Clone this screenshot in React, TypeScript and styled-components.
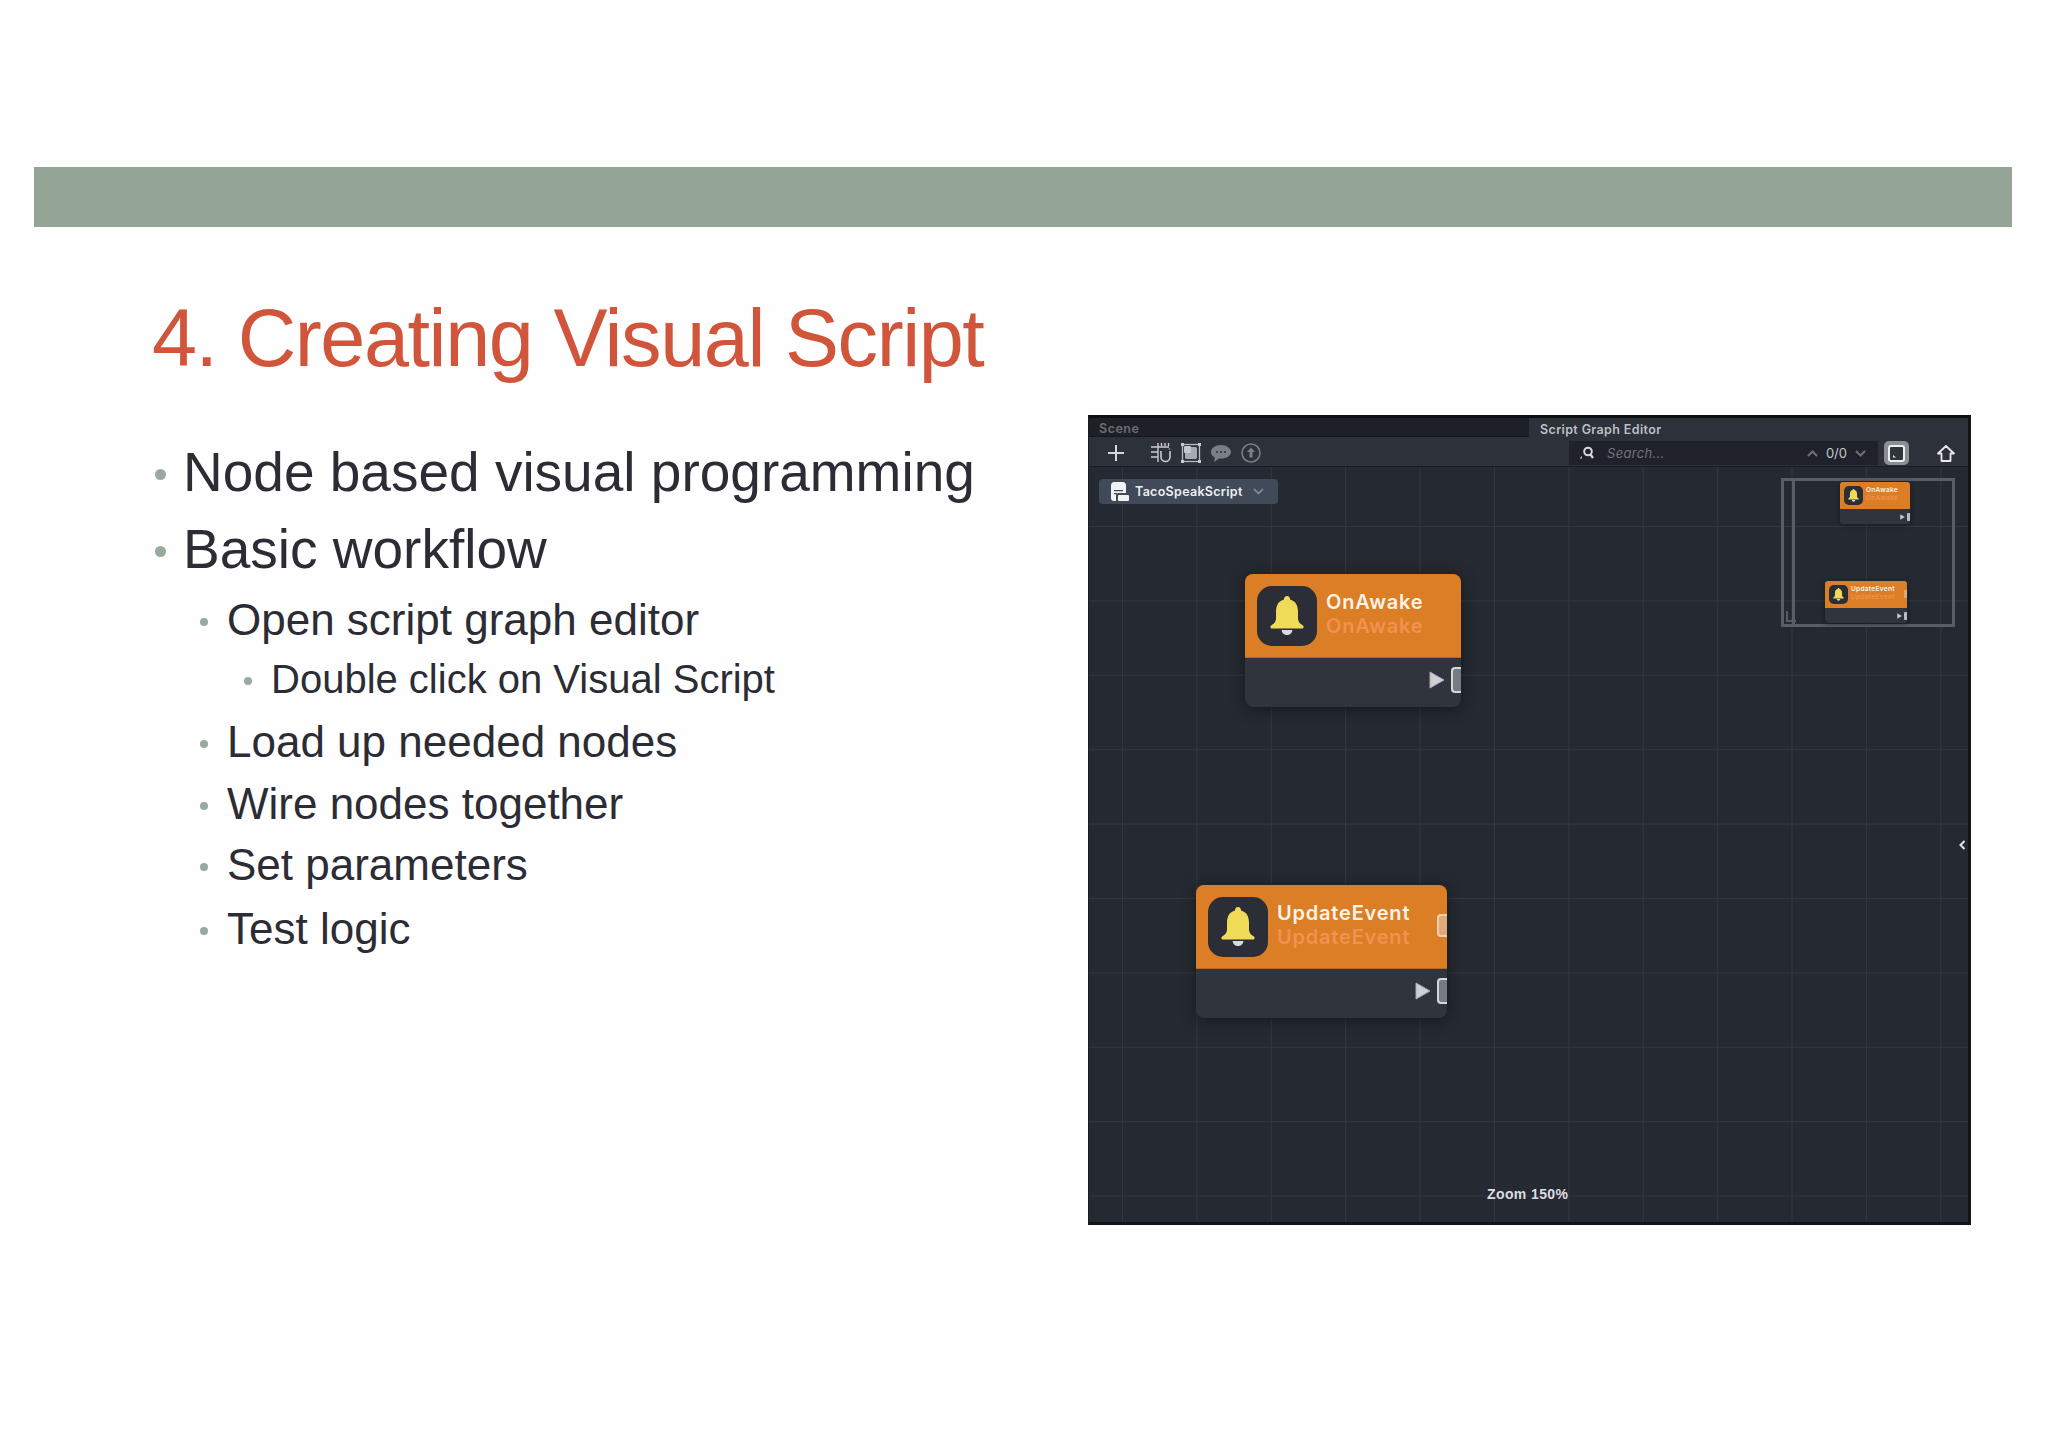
import React from "react";
import styled, { createGlobalStyle } from "styled-components";

const GlobalStyle = createGlobalStyle`
  html, body {
    margin: 0;
    padding: 0;
    background: #ffffff;
  }
`;

const Page = styled.div`
  width: 2048px;
  height: 1448px;
  overflow: hidden;
  font-family: "Liberation Sans", Arial, sans-serif;
  background: #fefefe;
`;

const Band = styled.div`
  width: 1978px;
  height: 60px;
  margin: 167px 0 0 34px;
  background: #94a598;
`;

const Title = styled.h1`
  margin: 63px 0 0 152px;
  font-size: 81px;
  line-height: 96px;
  font-weight: 400;
  letter-spacing: -1.44px;
  color: #d0553a;
  white-space: nowrap;
`;

const Content = styled.div`
  display: flex;
  align-items: flex-start;
`;

const BulletList = styled.ul`
  list-style: none;
  width: 1088px;
  margin: 0;
  padding: 54px 0 0 0;
  flex: none;
`;

const levels = {
  1: { size: 55, line: 64, indent: 155, dot: 11, gap: 17 },
  2: { size: 44, line: 52, indent: 200, dot: 8, gap: 19 },
  3: { size: 40, line: 46, indent: 244, dot: 8, gap: 19 },
};

const Item = styled.li<{ $level: 1 | 2 | 3; $top: number }>`
  display: flex;
  align-items: center;
  margin-top: ${(p) => p.$top}px;
  padding-left: ${(p) => levels[p.$level].indent}px;
  height: ${(p) => levels[p.$level].line}px;
  font-size: ${(p) => levels[p.$level].size}px;
  color: #2c2c35;
  white-space: nowrap;

  &::before {
    content: "";
    flex: none;
    width: ${(p) => levels[p.$level].dot}px;
    height: ${(p) => levels[p.$level].dot}px;
    margin-right: ${(p) => levels[p.$level].gap}px;
    margin-top: 4px;
    border-radius: 50%;
    background: #9aa89e;
  }
`;

const Editor = styled.div`
  width: 883px;
  height: 810px;
  margin-top: 29px;
  flex: none;
  box-sizing: border-box;
  display: flex;
  flex-direction: column;
  background: #252931;
  border-top: 3px solid #0e0f12;
  border-right: 3px solid #131418;
  border-bottom: 3px solid #131418;
  border-left: 1px solid #1a1c21;
  font-family: Inter, "Liberation Sans", sans-serif;
`;

const TabRow = styled.div`
  display: flex;
  height: 19px;
  background: #2d3139;
`;

const Tab = styled.div<{ $active?: boolean }>`
  display: flex;
  align-items: center;
  box-sizing: border-box;
  width: ${(p) => (p.$active ? "auto" : "440px")};
  flex: ${(p) => (p.$active ? 1 : "none")};
  padding: 3px 0 0 ${(p) => (p.$active ? "9px" : "10px")};
  font-size: 12.5px;
  font-weight: 600;
  letter-spacing: ${(p) => (p.$active ? "0.36px" : "0.5px")};
  color: ${(p) => (p.$active ? "#bcbfc4" : "#6b6f76")};
  background: ${(p) => (p.$active ? "#2d3139" : "#1d2027")};
  border-bottom: ${(p) => (p.$active ? "none" : "1px solid #15171b")};
  margin-right: ${(p) => (p.$active ? "0" : "2px")};
`;

const Toolbar = styled.div`
  display: flex;
  align-items: center;
  height: 30px;
  box-sizing: border-box;
  padding: 3px 0 0 19px;
  background: #2d3139;
  border-bottom: 1px solid #1a1c21;
`;

const ToolGroup = styled.div`
  display: flex;
  align-items: center;
  gap: 10px;
  margin-left: 27px;
`;

const SearchBox = styled.div`
  display: flex;
  align-items: center;
  width: 309px;
  height: 24px;
  margin-left: auto;
  box-sizing: border-box;
  padding: 0 12px 0 11px;
  background: #1f222a;
`;

const SearchHint = styled.span`
  margin-left: 13px;
  font-size: 13px;
  font-style: italic;
  letter-spacing: 0.3px;
  color: #6f7379;
`;

const Counter = styled.span`
  margin: 0 8px;
  font-size: 13px;
  color: #c4c6ca;
`;

const SearchEnd = styled.div`
  display: flex;
  align-items: center;
  margin-left: auto;
`;

const ToggleButton = styled.div`
  display: flex;
  align-items: center;
  justify-content: center;
  width: 25px;
  height: 24px;
  margin-left: 6px;
  border-radius: 5px;
  background: #8b8e94;
`;

const HomeButton = styled.div`
  display: flex;
  align-items: center;
  justify-content: center;
  width: 24px;
  margin: 0 10px 0 25px;
`;

const Canvas = styled.div`
  position: relative;
  flex: 1;
  background-color: #252931;
  background-image: linear-gradient(to right, #33373f 1px, transparent 1px),
    linear-gradient(to bottom, #33373f 1px, transparent 1px);
  background-size: 74.4px 74.4px;
  background-position: 33px 59px;
`;

const ScriptChip = styled.div`
  position: absolute;
  left: 10px;
  top: 12px;
  display: flex;
  align-items: center;
  width: 179px;
  height: 25px;
  box-sizing: border-box;
  padding-left: 12px;
  border-radius: 4px;
  background: #414a58;
  font-size: 12.5px;
  font-weight: 600;
  letter-spacing: 0.3px;
  color: #eceef0;
`;

const ChipLabel = styled.span`
  margin: 0 10px 0 6px;
`;

const Node = styled.div<{ $x: number; $y: number; $w: number }>`
  position: absolute;
  left: ${(p) => p.$x}px;
  top: ${(p) => p.$y}px;
  width: ${(p) => p.$w}px;
  border-radius: 8px;
  overflow: hidden;
  background: #30343c;
  box-shadow: 0 2px 14px rgba(10, 11, 14, 0.55);
`;

const NodeHead = styled.div`
  position: relative;
  display: flex;
  align-items: center;
  height: 84px;
  box-sizing: border-box;
  padding-left: 12px;
  background: #dc7e26;
  border-bottom: 1px solid #b9691f;
`;

const NodeIcon = styled.div`
  display: flex;
  align-items: center;
  justify-content: center;
  flex: none;
  width: 60px;
  height: 60px;
  border-radius: 15px;
  background: #2b2e36;
`;

const NodeText = styled.div`
  margin: 0 0 3px 9px;
  font-size: 20px;
  line-height: 24px;
  font-weight: 600;
  letter-spacing: 0.8px;
  color: #fbf3e6;
  white-space: nowrap;
`;

const NodeSub = styled.div`
  color: #f09250;
`;

const NodeBody = styled.div`
  display: flex;
  align-items: center;
  justify-content: flex-end;
  height: 49px;
  gap: 6px;
  padding-bottom: 5px;
  box-sizing: border-box;
`;

const Port = styled.div`
  width: 10px;
  height: 26px;
  box-sizing: border-box;
  border: 2px solid #d5d6d8;
  border-right: none;
  border-radius: 4px 0 0 4px;
  background: #767a81;
`;

const HeadPort = styled.div`
  position: absolute;
  right: 0;
  top: 29px;
  width: 10px;
  height: 23px;
  box-sizing: border-box;
  border: 2px solid #eccfae;
  border-right: none;
  border-radius: 4px 0 0 4px;
  background: #deaa78;
`;

const Minimap = styled.div`
  position: absolute;
  left: 692px;
  top: 11px;
  width: 174px;
  height: 149px;
  box-sizing: border-box;
  border: 3px solid #595d64;
`;

const MiniRail = styled.div`
  position: absolute;
  left: 8px;
  top: 0;
  bottom: 0;
  width: 3px;
  background: #595d64;
`;

const MiniCorner = styled.div`
  position: absolute;
  left: 2px;
  bottom: 2px;
  width: 8px;
  height: 9px;
  border-left: 2px solid #595d64;
  border-bottom: 2px solid #595d64;
`;

const MiniNode = styled.div<{ $x: number; $y: number; $w: number }>`
  position: absolute;
  left: ${(p) => p.$x}px;
  top: ${(p) => p.$y}px;
  width: ${(p) => p.$w}px;
  height: 42px;
  border-radius: 3px;
  overflow: hidden;
  background: #30343c;
  box-shadow: 0 1px 5px rgba(10, 11, 14, 0.5);
`;

const MiniHead = styled.div`
  position: relative;
  display: flex;
  align-items: flex-start;
  height: 27px;
  box-sizing: border-box;
  padding: 4px 0 0 4px;
  background: #dc7e26;
`;

const MiniIcon = styled.div`
  display: flex;
  align-items: center;
  justify-content: center;
  flex: none;
  width: 19px;
  height: 19px;
  border-radius: 5px;
  background: #2b2e36;
`;

const MiniText = styled.div`
  margin-left: 3px;
  font-size: 6.5px;
  line-height: 8px;
  font-weight: 600;
  letter-spacing: 0.3px;
  color: #fbf3e6;
  white-space: nowrap;
`;

const MiniBody = styled.div`
  display: flex;
  align-items: center;
  justify-content: flex-end;
  height: 15px;
  gap: 2px;
`;

const MiniPort = styled.div`
  width: 3px;
  height: 8px;
  border-radius: 1px 0 0 1px;
  background: #b9bbbf;
`;

const MiniHeadPort = styled(MiniPort)`
  position: absolute;
  right: 0;
  top: 9px;
  background: #deaa78;
`;

const ZoomLabel = styled.div`
  position: absolute;
  left: 398px;
  bottom: 20px;
  font-family: "Liberation Sans", Arial, sans-serif;
  font-size: 14px;
  font-weight: 700;
  letter-spacing: 0.4px;
  color: #dcdde0;
`;

const CollapseHandle = styled.div`
  position: absolute;
  right: 2px;
  top: 373px;
  display: flex;
`;

const Bell = ({ size }: { size: number }) => (
  <svg width={size} height={size * 1.15} viewBox="0 0 34 39">
    <path
      d="M17 0c-2 0-3 1.4-3 3.4C8.500 4.800 6 9.500 6 15.500v7c0 3-1.800 5.200-4.600 6.800C-.2 30.200.2 32.500 1.800 32.500h30.400c1.600 0 2-2.300.4-3.200-2.800-1.600-4.600-3.800-4.600-6.800v-7c0-6-2.500-10.700-8-12.100C20 1.400 19 0 17 0z"
      fill="#efdb57"
    />
    <path d="M11.500 34h11c-.5 3-2.500 5-5.500 5s-5-2-5.500-5z" fill="#d9dae2" />
  </svg>
);

const PlayMark = ({ w, h }: { w: number; h: number }) => (
  <svg width={w} height={h} viewBox="0 0 16 18">
    <path d="M1 1l14 8-14 8z" fill="#cfd0d4" stroke="#a9abb0" strokeLinejoin="round" />
  </svg>
);

const Chevron = ({ up }: { up?: boolean }) => (
  <svg width="11" height="7" viewBox="0 0 11 7">
    <path d={up ? "M1 6l4.500-4.500L10 6" : "M1 1l4.500 4.500L10 1"} fill="none" stroke="#6d7177" strokeWidth="2" />
  </svg>
);

const PlusIcon = () => (
  <svg width="16" height="16" viewBox="0 0 16 16">
    <path d="M8 0v16M0 8h16" stroke="#d6d7da" strokeWidth="2" />
  </svg>
);

const DebugIcon = () => (
  <svg width="20" height="20" viewBox="0 0 20 20" fill="none" stroke="#c9cbce" strokeWidth="1.400">
    <path d="M7 4v15M7 4V0M10.500 0v3M14 0v3M17.500 0v3M7 4h11M0 4h7M0 9h7M0 14h7" />
    <path d="M10 8v6a4.500 4.500 0 0 0 9 0V8" strokeWidth="1.600" />
    <path d="M18.500 5.500v1" />
  </svg>
);

const FrameIcon = () => (
  <svg width="20" height="20" viewBox="0 0 20 20">
    <rect x="1.500" y="1.500" width="17" height="17" fill="none" stroke="#b9bcc1" strokeWidth="1.300" />
    <rect x="4" y="4" width="12" height="12" rx="1.500" fill="#a5a9b0" />
    <rect x="3" y="3" width="7" height="7" rx="1" fill="#c4c8ce" />
    <path d="M0 0h3v3H0zM17 0h3v3h-3zM0 17h3v3H0zM17 17h3v3h-3z" fill="#c9cbce" />
  </svg>
);

const CommentIcon = () => (
  <svg width="20" height="20" viewBox="0 0 20 20">
    <path d="M10 2C4.500 2 0 5 0 9c0 2.300 1.500 4.300 3.800 5.500L3 19l5-3.500c.7.100 1.300.1 2 .1 5.500 0 10-3 10-6.600S15.500 2 10 2z" fill="#7a7e85" />
    <circle cx="6" cy="9" r="1" fill="#2d3139" />
    <circle cx="10" cy="9" r="1" fill="#2d3139" />
    <circle cx="14" cy="9" r="1" fill="#2d3139" />
  </svg>
);

const UploadIcon = () => (
  <svg width="20" height="20" viewBox="0 0 20 20">
    <circle cx="10" cy="10" r="9" fill="none" stroke="#7a7e85" strokeWidth="1.600" />
    <path d="M10 4.500l4 4.500h-2.500v5.500h-3V9H6z" fill="#7a7e85" />
  </svg>
);

const SearchIcon = () => (
  <svg width="14" height="14" viewBox="0 0 14 14" fill="none">
    <circle cx="8" cy="5.500" r="3.800" stroke="#d5d7da" strokeWidth="2" />
    <path d="M10.500 8.500L13 12" stroke="#d5d7da" strokeWidth="2.200" />
    <path d="M1 13v-2h1" stroke="#d5d7da" strokeWidth="1" />
  </svg>
);

const ScriptIcon = () => (
  <svg width="18" height="19" viewBox="0 0 18 19">
    <path d="M3 0h9c1.500 0 3 1.500 3 3v8H7.500C5.500 11 5 12 5 13.500V19H3c-1.500 0-3-1-3-2.500V3C0 1.500 1.500 0 3 0z" fill="#f2f3f4" />
    <path d="M3 8h9v1.300H3zM3 11h3v1.300H3z" fill="#414a58" />
    <rect x="7" y="13" width="11" height="6" rx="1" fill="#f2f3f4" />
  </svg>
);

const ChipChevron = () => (
  <svg width="11" height="7" viewBox="0 0 11 7">
    <path d="M1 1l4.500 4.500L10 1" fill="none" stroke="#7a8494" strokeWidth="1.800" />
  </svg>
);

const ToggleIcon = () => (
  <svg width="17" height="17" viewBox="0 0 17 17">
    <rect x="1" y="1" width="15" height="15" rx="2" fill="#30343c" stroke="#eceef0" strokeWidth="2" />
    <path d="M5 10v2.500h3z" fill="#eceef0" />
  </svg>
);

const HomeIcon = () => (
  <svg width="18" height="17" viewBox="0 0 18 17">
    <path d="M1 8.500L9 1l8 7.500h-3.500V16h-9V8.500z" fill="none" stroke="#e9eaec" strokeWidth="1.800" strokeLinejoin="round" />
  </svg>
);

const ChevronLeft = () => (
  <svg width="7" height="10" viewBox="0 0 7 10">
    <path d="M5.500 1L1.500 5l4 4" fill="none" stroke="#e2e3e6" strokeWidth="2" />
  </svg>
);

const App = () => (
  <Page>
    <GlobalStyle />
    <Band />
    <Title>4. Creating Visual Script</Title>
    <Content>
      <BulletList>
        <Item $level={1} $top={0}>Node based visual programming</Item>
        <Item $level={1} $top={13}>Basic workflow</Item>
        <Item $level={2} $top={13}>Open script graph editor</Item>
        <Item $level={3} $top={10}>Double click on Visual Script</Item>
        <Item $level={2} $top={14}>Load up needed nodes</Item>
        <Item $level={2} $top={10}>Wire nodes together</Item>
        <Item $level={2} $top={9}>Set parameters</Item>
        <Item $level={2} $top={12}>Test logic</Item>
      </BulletList>
      <Editor>
        <TabRow>
          <Tab>Scene</Tab>
          <Tab $active>Script Graph Editor</Tab>
        </TabRow>
        <Toolbar>
          <PlusIcon />
          <ToolGroup>
            <DebugIcon />
            <FrameIcon />
            <CommentIcon />
            <UploadIcon />
          </ToolGroup>
          <SearchBox>
            <SearchIcon />
            <SearchHint>Search...</SearchHint>
            <SearchEnd>
              <Chevron up />
              <Counter>0/0</Counter>
              <Chevron />
            </SearchEnd>
          </SearchBox>
          <ToggleButton>
            <ToggleIcon />
          </ToggleButton>
          <HomeButton>
            <HomeIcon />
          </HomeButton>
        </Toolbar>
        <Canvas>
          <ScriptChip>
            <ScriptIcon />
            <ChipLabel>TacoSpeakScript</ChipLabel>
            <ChipChevron />
          </ScriptChip>

          <Node $x={156} $y={107} $w={216}>
            <NodeHead>
              <NodeIcon><Bell size={34} /></NodeIcon>
              <NodeText>
                OnAwake
                <NodeSub>OnAwake</NodeSub>
              </NodeText>
            </NodeHead>
            <NodeBody>
              <PlayMark w={16} h={18} />
              <Port />
            </NodeBody>
          </Node>

          <Node $x={107} $y={418} $w={251}>
            <NodeHead>
              <NodeIcon><Bell size={34} /></NodeIcon>
              <NodeText>
                UpdateEvent
                <NodeSub>UpdateEvent</NodeSub>
              </NodeText>
              <HeadPort />
            </NodeHead>
            <NodeBody>
              <PlayMark w={16} h={18} />
              <Port />
            </NodeBody>
          </Node>

          <Minimap>
            <MiniRail />
            <MiniCorner />
            <MiniNode $x={56} $y={1} $w={70}>
              <MiniHead>
                <MiniIcon><Bell size={11} /></MiniIcon>
                <MiniText>
                  OnAwake
                  <NodeSub>OnAwake</NodeSub>
                </MiniText>
              </MiniHead>
              <MiniBody>
                <PlayMark w={5} h={6} />
                <MiniPort />
              </MiniBody>
            </MiniNode>
            <MiniNode $x={41} $y={100} $w={82}>
              <MiniHead>
                <MiniIcon><Bell size={11} /></MiniIcon>
                <MiniText>
                  UpdateEvent
                  <NodeSub>UpdateEvent</NodeSub>
                </MiniText>
                <MiniHeadPort />
              </MiniHead>
              <MiniBody>
                <PlayMark w={5} h={6} />
                <MiniPort />
              </MiniBody>
            </MiniNode>
          </Minimap>

          <CollapseHandle>
            <ChevronLeft />
          </CollapseHandle>
          <ZoomLabel>Zoom 150%</ZoomLabel>
        </Canvas>
      </Editor>
    </Content>
  </Page>
);

export default App;
